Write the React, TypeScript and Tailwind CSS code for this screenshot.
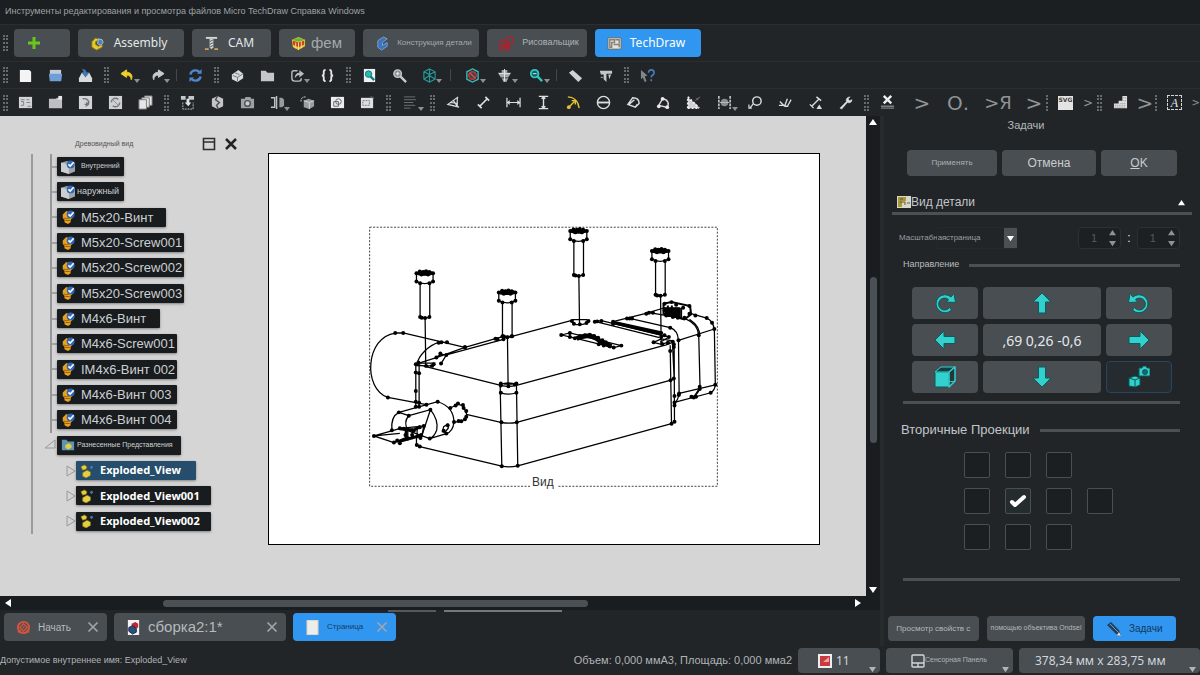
import React, { useState } from 'react';
import clsx from 'clsx';

const NOTO = "font-['Noto_Sans',sans-serif]";

const icons: Record<string, React.ReactNode> = {
    newFile: <path d="M2 2h10l2 2v11H2z" fill="#f4f4f4" />,
    open: (
        <>
            <path d="M2 2h12v10H2z" fill="#c3cdd6" />
            <path d="M1 6h14l-1 8H2z" fill="#6f9fd8" />
        </>
    ),
    save: (
        <>
            <path d="M4 5h8l3 6v4H1v-4z" fill="#d9dcdf" />
            <path d="M4 1c3 0 5 1 5 4h3l-4 5-4-5h2c0-2-1-3-2-4z" fill="#3f77b8" />
        </>
    ),
    undo: <path d="M7 2 1 6l6 4V7.500c3 0 5 2 5 5 2-4 0-8-5-8z" fill="#f0cf2a" stroke="#f0cf2a" />,
    redo: <path d="m9 2 6 4-6 4V7.500c-3 0-5 2-5 5-2-4 0-8 5-8z" fill="#c9cdd0" stroke="#c9cdd0" />,
    refresh: (
        <g fill="none" stroke="#4f86d0" strokeWidth="2.500">
            <path d="M2.500 7c1-5 8-6 10-2M13.500 9c-1 5-8 6-10 2" />
            <path d="M14.500 1v5h-5zM1.500 15v-5h5z" fill="#4f86d0" stroke="none" />
        </g>
    ),
    part: (
        <>
            <path d="M2 7 9 2l5 4v5l-6 4-6-3z" fill="#d9dadb" />
            <path d="m3 8 5 2 6-4M5 5l5 2M8 10v4" stroke="#6d7376" fill="none" />
        </>
    ),
    folder: <path d="M1 3h5l2 2h7v9H1z" fill="#c4c6c8" />,
    share: (
        <>
            <path d="M8 3H4Q2 3 2 5v6q0 3 3 3h5q2 0 2-3" fill="none" stroke="#b9bdc0" strokeWidth="1.500" />
            <path d="M5 11c0-4 2-6 5-6V2l5 4-5 4V7.500c-2 0-3 1-5 3.500z" fill="#b9bdc0" />
        </>
    ),
    braces: (
        <path d="M6 2Q4 2 4 4v2q0 2-2 2 2 0 2 2v2q0 2 2 2M10 2q2 0 2 2v2q0 2 2 2-2 0-2 2v2q0 2-2 2" fill="none" stroke="#e2e4e5" strokeWidth="2" />
    ),
    fitAll: (
        <>
            <path d="M2 1h12v14H2z" fill="#eef2f2" />
            <circle cx="7" cy="6.500" r="3.500" fill="#2fb5b0" stroke="#0e7f7c" />
            <path d="m9 9 4 4" stroke="#0e7f7c" strokeWidth="2.500" />
        </>
    ),
    fitSelection: (
        <>
            <circle cx="6" cy="6" r="4" fill="#8b8f92" stroke="#c8cbcd" strokeWidth="1.500" />
            <path d="m9 9 6 6" stroke="#c8cbcd" strokeWidth="2.500" />
            <path d="m6 4 2 2-2 2-2-2z" fill="#ddd" />
        </>
    ),
    isoCube: (
        <path d="m8 1 6 3v8l-6 3-6-3V4zM2 4l6 3 6-3M8 7v8M8 1v6M2 12l6-4 6 4" fill="none" stroke="#27989a" strokeWidth="1.200" />
    ),
    noClip: (
        <>
            <path d="m8 1 6 3v8l-6 3-6-3V4z" fill="none" stroke="#36b8b6" strokeWidth="1.500" />
            <circle cx="8" cy="8" r="4" fill="#31484c" stroke="#c93636" strokeWidth="1.500" />
            <path d="m5 5 6 6" stroke="#d84a4a" strokeWidth="1.500" />
        </>
    ),
    viewHead: (
        <>
            <path d="M5 2h6v3h4l-3 5H4L1 5h4zM5 11h7l-2 4H7z" fill="#a4a8aa" />
            <path d="M8 1v13M2 6h12" stroke="#e5e5e5" />
        </>
    ),
    zoom: (
        <>
            <circle cx="6" cy="6" r="4" fill="#155f60" stroke="#2fc7c2" strokeWidth="2" />
            <path d="m9 9 5 5" stroke="#2fc7c2" strokeWidth="2.500" />
            <path d="M4 6h4" stroke="#c8f3f1" />
        </>
    ),
    ruler: <path d="m5 2 10 9-4 4L1 5z" fill="#cfd1d2" />,
    caliper: (
        <>
            <path d="M2 3h13v3H9v9L6 12V7H3zM11 7h3l-2 5" fill="#c4c7c9" />
            <path d="M3 10h2" stroke="#c4c7c9" />
        </>
    ),
    whatsThis: (
        <>
            <path d="m1 2 7 6-3 1 2 5-2 1-2-5-2 2z" fill="#80868a" />
            <path d="M9 5c0-4 6-4 6 0 0 3-3 2-3 5M12 12v2" fill="none" stroke="#4a7cc0" strokeWidth="1.700" />
        </>
    ),
    pageDefault: (
        <>
            <path d="M1 2h14v12H1z" fill="#d3d4d5" />
            <path d="M3 5h4M3 7h3v4H3M9 5h3M9 8h4M10 12h4" stroke="#7b8083" fill="none" />
        </>
    ),
    pageTemplate: (
        <>
            <path d="M1 4h7l2-1h5v11H1z" fill="#bdbfc0" />
            <path d="M11 1h4v4h-4z" fill="#e8e8e8" />
        </>
    ),
    pageRedraw: (
        <>
            <path d="M1 1h14v14H1z" fill="#d3d4d5" />
            <path d="M5 4c6-1 8 4 5 6H7" fill="none" stroke="#707477" strokeWidth="1.500" />
            <path d="m9 7 3 3-4 3z" fill="#707477" />
        </>
    ),
    pageRefresh: (
        <>
            <path d="M1 1h14v14H1z" fill="#cfd0d1" />
            <circle cx="8" cy="8" r="4.500" fill="none" stroke="#74787b" strokeWidth="1.500" strokeDasharray="10 4" />
            <path d="m5 5 6 6" stroke="#8b8f91" />
        </>
    ),
    pageCopies: (
        <g fill="#e6e6e6" stroke="#777b7e">
            <path d="M7 1h8v10H7z" />
            <path d="M4 3h8v10H4z" />
            <path d="M1 5h8v10H1z" />
        </g>
    ),
    viewInsert: (
        <>
            <path d="M1 1h5v4H1zM9 1h6v4H9z" fill="#c5c7c9" />
            <path d="M3 8v7h11V8" fill="none" stroke="#c5c7c9" strokeDasharray="2 1" />
            <path d="M7 4h3v4h2l-3 4-4-4h2z" fill="#e1e3e4" />
        </>
    ),
    broken: (
        <>
            <path d="m2 4 6-3 6 3v8l-6 3-6-3z" fill="#c3c5c7" />
            <path d="m8 1-2 4 4 3-3 3 2 4" fill="none" stroke="#494e51" strokeWidth="1.500" />
        </>
    ),
    camera: (
        <>
            <path d="M1 4h4l1-2h5l1 2h3v10H1z" fill="#9ea1a3" />
            <circle cx="8" cy="9" r="3" fill="#caccce" stroke="#4d5154" strokeWidth="1.500" />
        </>
    ),
    section: (
        <>
            <path d="M1 3h4v10H1M7 1v14" fill="none" stroke="#bfc2c4" strokeWidth="1.500" />
            <path d="M10 3h3l2 2v6l-2 2h-3z" fill="#979b9d" />
        </>
    ),
    detail: (
        <>
            <path d="m4 6 5-2 6 2v6l-5 3-6-2z" fill="#9c9fa2" />
            <path d="m4 6 6 2 5-2M10 8v7" stroke="#d4d6d7" fill="none" />
            <path d="M1 7c0-4 2-5 5-5" fill="none" stroke="#d4d6d7" strokeDasharray="2 1" />
        </>
    ),
    draftView: (
        <>
            <path d="M1 2h14v12H1z" fill="#ececec" />
            <circle cx="9" cy="7" r="3" fill="none" stroke="#606568" />
            <path d="M4 7h5v5H4z" fill="none" stroke="#606568" />
        </>
    ),
    clipGroup: (
        <>
            <path d="M1 3h13v11H1z" fill="#dedfe0" />
            <path d="M3 6h7v5H3zM11 2h3v3" fill="none" stroke="#73777a" strokeDasharray="2 1" />
        </>
    ),
    stack: <path d="M1 2h12M1 5h13M1 8h10M1 11h12M1 14h7" stroke="#6d7275" fill="none" />,
    angle: <path d="m13 2-11 8 12 3M12 3v10M8 6l4 6M5 8l7 1" fill="none" stroke="#dcdedf" strokeWidth="1.300" />,
    dimension: <path d="m4 12 8-8M2 10l4 4M10 2l4 4" stroke="#dcdedf" strokeWidth="1.800" />,
    dimH: <path d="M1 3v10M15 3v10M1 8h14M4 6 2 8l2 2M12 6l2 2-2 2" stroke="#dcdedf" strokeWidth="1.300" fill="none" />,
    dimV: <path d="M3 1.500h10M3 14.500h10M8 2v12M6 4l2-2 2 2M6 12l2 2 2-2" stroke="#dcdedf" strokeWidth="1.500" fill="none" />,
    radius: (
        <>
            <path d="M2 2c6 0 11 4 12 12M3 13l6-6M6 6h4v4" fill="none" stroke="#e5c22e" strokeWidth="1.500" />
            <circle cx="3" cy="13" r="2" fill="#e5c22e" />
        </>
    ),
    diameter: (
        <>
            <circle cx="8" cy="8" r="6.500" fill="none" stroke="#dcdedf" strokeWidth="1.500" />
            <path d="M2 8h12" stroke="#dcdedf" strokeWidth="2" />
        </>
    ),
    angle2: <path d="m7 3-5 7 8 3 4-4c0-4-3-6-7-6zM3 10l6-5M10 13l2-3" fill="none" stroke="#dcdedf" strokeWidth="1.500" />,
    angle3: (
        <>
            <path d="m7 4-4 7 8 2c4-3 2-8-4-9z" fill="none" stroke="#dcdedf" strokeWidth="1.500" />
            <g fill="#e9e9e9">
                <circle cx="7" cy="4" r="2" />
                <circle cx="3" cy="12" r="2" />
                <circle cx="12" cy="13" r="2" />
            </g>
        </>
    ),
    areaHatch: (
        <>
            <path d="M2 1c1 5 10 7 12 13H2z" fill="#cfd2d3" />
            <path d="m10 6 5-4M11 3l2 2" stroke="#777c7f" />
            <path d="M2 14V2M2 14h12M2 2l12 12" stroke="#efefef" strokeWidth="2" strokeDasharray="2 2" />
        </>
    ),
    extent: (
        <>
            <circle cx="8" cy="8" r="4" fill="#898d90" />
            <path d="M2 1v14M14 1v14" stroke="#dcdedf" strokeWidth="1.500" strokeDasharray="3 1" />
            <path d="M3 8h10" stroke="#b7babc" />
        </>
    ),
    balloon: (
        <>
            <circle cx="9.500" cy="6.500" r="4.500" fill="none" stroke="#dcdedf" strokeWidth="1.500" />
            <path d="m6 9-4 5M1 10v4h3" stroke="#dcdedf" strokeWidth="1.300" fill="none" />
        </>
    ),
    axo: <path d="m2 7 5 5M7 12l3-8M10 12l4-7M1 11h6M7 12h4" stroke="#dcdedf" strokeWidth="1.400" fill="none" />,
    linkDim: (
        <>
            <path d="m4 12 8-8M2 10l4 4M9 2l5 4" stroke="#dcdedf" strokeWidth="1.500" />
            <path d="m12 10 3 5H9z" fill="#dcdedf" />
        </>
    ),
    repair: <path d="m2 14 7-7c-1-3 1-5 4-5l-2 2 1 2 3-1c0 3-3 4-5 3l-6 7z" fill="#dcdedf" stroke="#dcdedf" strokeWidth=".500" />,
    cleanup: (
        <>
            <path d="m4 1 8 8M12 1 4 9" stroke="#efefef" strokeWidth="2.500" />
            <path d="M1 12h14M1 14h14" stroke="#7b8083" strokeWidth="1.500" />
        </>
    ),
    hatch: (
        <>
            <path d="M10 1h5v13H1V9h5V6h4z" fill="#dedede" />
            <path d="M2 11h12M2 13h12M11 3h3M11 6h3M8 9h6" stroke="#8d9193" strokeDasharray="1 1" />
        </>
    ),
};

interface ToolProps {
    icon: string;
    menu?: boolean;
    wide?: boolean;
}

const Tool: React.FC<ToolProps> = ({ icon, menu, wide }) => (
    <button
        type="button"
        aria-label={icon}
        className={clsx('relative flex h-6 shrink-0 items-center justify-center hover:bg-white/10', wide ? 'w-8' : 'w-[30px]')}
    >
        <svg viewBox="0 0 16 16" className="size-[15px]">
            {icons[icon]}
        </svg>
        {menu && <span className="absolute bottom-1 right-0.5 border-x-3 border-t-4 border-x-transparent border-t-[#8d9194]" />}
    </button>
);

const Grip = ({ first = false }: { first?: boolean }) => (
    <span className={clsx('flex shrink-0 justify-center', first ? 'w-2.5' : 'w-3')}>
        <span className="h-4 w-[5px] border-x-2 border-dotted border-[#666b6e]" />
    </span>
);

const Sep = ({ wide = false }: { wide?: boolean }) => (
    <span className={clsx('flex shrink-0 justify-center', wide ? 'w-3' : 'w-2')}>
        <span className="h-3 w-px bg-[#43484b]" />
    </span>
);

const Tools = ({ names }: { names: string }) => (
    <>
        {names.split(' ').map((name) => (
            <Tool key={name} icon={name} />
        ))}
    </>
);

const workbenches = [
    { label: 'Assembly', width: 'w-[106px]', text: `pr-2 text-[12px] text-gray-200 ${NOTO}` },
    { label: 'CAM', width: 'w-[79px]', text: `pr-2 text-[12px] text-gray-200 ${NOTO}` },
    { label: 'фем', width: 'w-[76px]', text: 'pr-2 text-[15px] text-[#a5a9ac]' },
    { label: 'Конструкция детали', width: 'w-[116px]', text: 'text-[8px] text-[#a5a9ac]' },
    { label: 'Рисовальщик', width: 'w-[100px]', text: 'text-[9px] text-[#b0b4b7]' },
    { label: 'TechDraw', width: 'w-[106px]', text: `pr-2 text-[12px] text-white ${NOTO}` },
];

const workbenchIcons = [
    <>
        <path d="M6 2 2 6v6l5 3 6-3V9l-4 2-3-2V6l4-2z" fill="#e6ca2b" stroke="#8c7a14" />
        <path d="m9 3 4 1 1 3-3 3-3-2z" fill="#4e83bd" stroke="#dbe7f3" strokeWidth=".700" />
    </>,
    <>
        <path d="M2 1h12v2H2z" fill="#d5d8d5" />
        <path d="M6 3h4v9l-2 2-2-2z" fill="#cdd6cf" />
        <path d="m6 6 4-2M6 9l4-2M6 12l4-2" stroke="#506258" />
        <path d="M1 13h4v2H1zM11 13h4v2h-4z" fill="#d8a05a" />
    </>,
    <>
        <path d="m1 4 7-3 7 3v7l-7 4-6-3z" fill="#e7c62c" />
        <path d="m2 5 6 2 6-2v4l-6 3-6-3z" fill="#cf3c2c" />
        <path d="m1 4 7-2 7 2-7 2z" fill="#63b844" />
        <path d="M5 7v6M8 7v8M11 6v7" stroke="#f1e28a" />
    </>,
    <>
        <path d="m3 5 6-4 4 2-5 4v3l5-3v4l-6 4-4-3z" fill="#3c74bd" stroke="#88b1e2" strokeWidth=".800" />
    </>,
    <g fill="none" stroke="#b3202c" strokeWidth="1.500">
        <path d="M1 6h10v9H1zM4 9h5v3H4z" />
        <circle cx="11" cy="5" r="4" />
    </g>,
    <>
        <path d="M1 2h14v12H1z" fill="#e7e3d8" stroke="#6c6a64" />
        <path d="M3 4h5v3H5v5H3zM9 4h4v4M7 9h6v3" fill="none" stroke="#85827b" strokeWidth="1.500" />
    </>,
];

interface TreeItem {
    label: string;
    kind: 'body' | 'screw' | 'group' | 'view';
    width: string;
    text?: string;
    selected?: boolean;
}

const treeItems: TreeItem[] = [
    { label: 'Внутренний', kind: 'body', width: 'w-[67px]', text: 'pl-1 text-[7px]' },
    { label: 'наружный', kind: 'body', width: 'w-[67px]', text: 'text-[9px]' },
    { label: 'M5x20-Винт', kind: 'screw', width: 'w-[109px]' },
    { label: 'M5x20-Screw001', kind: 'screw', width: 'w-[127px]' },
    { label: 'M5x20-Screw002', kind: 'screw', width: 'w-[127px]' },
    { label: 'M5x20-Screw003', kind: 'screw', width: 'w-[127px]' },
    { label: 'M4x6-Винт', kind: 'screw', width: 'w-[103px]' },
    { label: 'M4x6-Screw001', kind: 'screw', width: 'w-[120px]' },
    { label: 'IM4x6-Винт 002', kind: 'screw', width: 'w-[120px]' },
    { label: 'M4x6-Винт 003', kind: 'screw', width: 'w-[120px]' },
    { label: 'M4x6-Винт 004', kind: 'screw', width: 'w-[120px]' },
    { label: 'Разнесенные Представления', kind: 'group', width: 'w-[124px]', text: 'text-[7px]' },
    { label: 'Exploded_View', kind: 'view', width: 'w-[120px]', selected: true },
    { label: 'Exploded_View001', kind: 'view', width: 'w-[135px]' },
    { label: 'Exploded_View002', kind: 'view', width: 'w-[135px]' },
];

const CheckBadge = () => (
    <>
        <circle cx="11" cy="5" r="4.500" fill="#2f67b5" />
        <path d="m8.500 5 2 2 4-4.500" fill="none" stroke="#fff" strokeWidth="1.800" />
    </>
);

const treeIcons: Record<TreeItem['kind'], React.ReactNode> = {
    body: (
        <>
            <path d="m0 3 7-2 9 2v10l-7 3-9-3z" fill="#a1a5aa" />
            <path d="m0 3 9 2v11l-9-3z" fill="#caced2" />
            <CheckBadge />
        </>
    ),
    screw: (
        <>
            <path d="m2 5 4-4 7 3v5l-2 2v3l-3 2-4-2v-3L2 9z" fill="#eda11b" />
            <path d="m3 9 3 1 4-1M5 12h5" stroke="#8f5a07" fill="none" />
            <CheckBadge />
        </>
    ),
    group: (
        <>
            <path d="M1 2h5l2 2h7v10H1z" fill="#5f92b3" />
            <path d="m5 8 4-2 3 2v3l-4 2-3-2z" fill="#e0cd45" />
        </>
    ),
    view: (
        <>
            <path d="m1 3 4-2 3 2-1 3-4 1zM3 10l5-3 4 2v4l-5 3-4-2z" fill="#e3cf3f" stroke="#82751a" strokeWidth=".700" />
            <path d="m11 3 3-1 1 2-2 2z" fill="#4f74b5" />
        </>
    ),
};

const TreeRow: React.FC<{ item: TreeItem }> = ({ item }) => (
    <li className={clsx('flex items-center', item.kind === 'view' ? 'pl-4' : item.kind === 'group' ? 'pl-[11px]' : 'ml-[17px] border-l-2 border-[#959799]')}>
        {item.kind === 'view' && (
            <svg viewBox="0 0 10 12" className="ml-[17px] h-3 w-2.5">
                <path d="m1 1 8 5-8 5z" fill="none" stroke="#999" />
            </svg>
        )}
        {item.kind === 'group' && (
            <svg viewBox="0 0 12 12" className="h-3 w-3">
                <path d="M1 9h10V1z" fill="none" stroke="#999" />
            </svg>
        )}
        {item.kind !== 'view' && item.kind !== 'group' && <span className="h-0.5 w-[5px] bg-[#a3a5a6]" />}
        <button
            type="button"
            className={clsx(
                'flex h-[19px] items-center whitespace-nowrap rounded-[1px] pl-1 text-left text-[#cdd0d2] shadow shadow-black/30',
                item.width,
                item.kind === 'body' || item.kind === 'group' ? 'gap-0.5' : 'gap-1.5',
                item.kind === 'group' && 'ml-px',
                item.selected ? 'bg-[#264d6b]' : 'bg-[#181c1e]',
            )}
        >
            <svg viewBox="0 0 16 16" className="size-[14px] shrink-0">
                {treeIcons[item.kind]}
            </svg>
            <span className={item.text ?? (item.kind === 'view' ? `text-[11px] font-bold text-white ${NOTO}` : 'text-[13px]')}>
                {item.label}
            </span>
        </button>
    </li>
);

const TreePanel = () => (
    <aside className="w-60 shrink-0 pt-5">
        <header className="mb-0.5 flex h-4 items-center pl-[75px] text-[#555]">
            <h2 className="w-[127px] text-[7px]">Древовидный вид</h2>
            <button type="button" aria-label="float" className="flex w-[22px]">
                <svg viewBox="0 0 14 14" className="size-[14px]">
                    <path d="M1.500 1.500h11v11h-11zM1 5h12" fill="none" stroke="#2c2f31" strokeWidth="1.600" />
                </svg>
            </button>
            <button type="button" aria-label="close">
                <svg viewBox="0 0 14 14" className="size-[14px]">
                    <path d="m2 2 10 10M12 2 2 12" stroke="#222527" strokeWidth="2.500" />
                </svg>
            </button>
        </header>
        <ul className="ml-[31px] grid h-[380px] auto-rows-fr border-l-2 border-[#999b9c]">
            {treeItems.map((item) => (
                <TreeRow key={item.label} item={item} />
            ))}
        </ul>
    </aside>
);

const Dots = ({ points }: { points: string }) => (
    <>
        {points.split(' ').map((p, i) => {
            const [x, y] = p.split(',');
            return <circle key={i} cx={x} cy={y} r="6" fill="#000" stroke="none" />;
        })}
    </>
);

// cap screw hanging above its hole, (x, y) is the centre of the head
const Screw = ({ x, y, axis }: { x: number; y: number; axis: number }) => (
    <g transform={`translate(${x} ${y})`}>
        <ellipse cx="0" cy="0" rx="25" ry="6" fill="#000" />
        <path d={`M-25 0V25Q0 37 25 25V0M-14 30V132Q0 138 15 132V30M1 134L3 ${axis}`} />
        <Dots points="-25,0 -15,-5 -5,-4 4,-6 14,-4 25,0 -10,4 10,4 -25,25 25,25 -14,30 14,30 -14,132 -9,134 1,135 14,132" />
    </g>
);

const Drawing = () => (
    <svg viewBox="0 0 552 391" className="block h-auto w-full border border-black bg-white" role="img" aria-label="Вид">
        <path d="M101 73.500H450V333.500H290M262 333.500H101V73.500" fill="none" stroke="#444" strokeDasharray="2 1.500" />
        <text x="264" y="333" fontSize="12" fill="#333" fontFamily="Liberation Sans">
            Вид
        </text>
        <g transform="translate(92 67) scale(.3333)" fill="none" stroke="#000" strokeWidth="3.800">
            <Screw x={193} y={158} axis={279} />
            <Screw x={441} y={216} axis={281} />
            <Screw x={656} y={31} axis={280} />
            <Screw x={902} y={91} axis={280} />

            {/* motor */}
            <path d="M104 338H128L314 381M104 338C15 350 5 505 82 532L198 554" />
            <path d="M260 366H235C205 375 175 405 170 430" />
            <Dots points="104,338 128,338 314,381 82,532 198,554 235,367 243,366 260,366" />

            {/* gearbox body */}
            <path d="M166 432 228 412 314 381 406 355 430 348 456 348 636 300M258 404 430 357M228 412 240 402 258 404 242 430" />
            <path d="M166 432 422 496Q446 502 469 496L920 374 943 365M168 429H222L215 437 166 436" />
            <path d="M166 430V562M176 432V560M168 645V672L178 680 425 739Q448 744 473 738L936 611" />
            <path d="M318 583 422 607Q447 612 470 607L934 480 943 475" />
            <path d="M420 490 425 739M469 490 473 738M420 494Q445 482 469 494M422 518Q446 526 469 518M432 492H458" />
            <path d="M932 375 936 611M939 370 944 475M944 370 945 605 936 611" />
            <Dots points="166,432 174,427 228,412 240,400 258,404 242,430 314,381 406,355 412,357 430,357 430,348 456,348 220,432 215,437 197,437 166,457 176,459 166,513 166,545 176,548 166,560 176,560 169,675 178,680 422,490 469,490 422,496 464,493 445,498 422,518 469,518 424,607 470,607 425,739 473,738 932,392 943,372 943,380 933,480 943,475 936,611 945,605 945,556" />

            {/* output side */}
            <path d="M636 301 642 311Q660 316 680 309L686 302 680 298H640ZM705 303 725 301 928 350 902 366M705 303 900 352M760 304 905 338" />
            <path d="M762 308 905 343M764 305 905 336" strokeWidth="7" />
            <path d="M760 304 862 278 915 262M810 294 932 322Q955 330 957 360L959 520Q955 545 945 547M870 277 980 296Q1015 310 1018 345L1022 505Q1010 530 996 530" />
            <path d="M990 297Q1025 320 1020 350M990 278 1042 293Q1060 300 1065 326L1068 494Q1067 510 1054 518L945 547M957 360 1065 326M959 520 1068 494M1005 528 1020 505" />
            <path d="M882 366 905 372 940 362 905 356Z" />
            <Dots points="636,302 642,310 660,312 680,308 686,302 705,304 712,303 725,302 760,304 760,311 802,294 810,294 817,294 860,280 868,277 880,277 932,322 957,360 905,338 905,350 915,345 928,350 882,366 908,371 925,367 940,364 1042,293 1058,307 1065,326 1068,494 1054,518 1018,345 1021,500 1021,507 996,530 1003,532 1010,530 959,520 958,525 945,528 945,547" />
            <path d="M912 250 936 245 992 257 995 282 975 297 912 280ZM925 255V285M937 255V290M950 262V292M965 262V292" strokeWidth="6" />
            <path d="M915 262H960V288H920Z" fill="#000" />
            <Dots points="915,250 936,245 950,253 990,257 971,262 990,280 1008,285 975,292 915,270 920,285 940,290 955,292" />

            {/* engraved mark on the lid */}
            <path d="M604 344 630 338 785 376 762 382 630 350ZM630 338V350" />
            <path d="M650 355Q690 335 720 362L755 378" strokeWidth="14" />
            <Dots points="604,344 630,338 630,350 785,376 762,382 645,354 660,347 675,345 690,343 703,347 715,352 728,360 738,366 750,378 717,372 732,376" />

            {/* cable gland */}
            <path d="M115 577 232 545Q280 560 281 606Q278 635 258 641L208 656M115 577Q90 590 94 631M145 587 210 569Q235 600 229 630Q222 650 208 656M145 587Q128 605 142 632M115 577 145 587M210 569 185 645M142 632 208 656" />
            <path d="M270 564 293 552 310 558 319 583 315 598 300 605 281 606M246 635 250 620 262 613 264 624 254 637Z" />
            <path d="M40 648 120 625 190 618 185 645 100 668ZM40 648 118 640M100 668 130 655 185 650M142 625V662M155 625V658M170 620V655" />
            <path d="M118 626 160 630 180 620M115 665 185 645M137 630V660" strokeWidth="9" />
            <Dots points="115,577 232,545 281,606 258,641 208,656 145,587 210,569 94,631 270,564 286,556 293,550 308,555 310,564 318,573 318,590 314,598 303,604 295,603 262,616 250,632 40,648 100,668 118,625 130,626 160,632 190,618 178,622 118,670 110,662 142,655 155,645 182,645 180,654 135,645" />
        </g>
    </svg>
);

const Triangle = ({ dir, className }: { dir: 'up' | 'down' | 'left' | 'right'; className?: string }) => {
    const shape = { up: 'm0 7 4-6 4 6z', down: 'm0 1 4 6 4-6z', left: 'm7 0-6 4 6 4z', right: 'm1 0 6 4-6 4z' };
    return (
        <svg viewBox="0 0 8 8" className={clsx('shrink-0 fill-current', className ?? 'size-2')}>
            <path d={shape[dir]} />
        </svg>
    );
};

const Canvas = () => (
    <div className="flex">
        <div className="min-w-0 flex-1">
            <div className="flex h-[480px] bg-[#d5d5d5]">
                <TreePanel />
                <div className="min-w-0 flex-1 pl-7 pr-[46px] pt-[37px]">
                    <Drawing />
                </div>
            </div>
            <div className="flex h-3.5 items-center bg-[#191d1f] px-1 text-white">
                <Triangle dir="left" />
                <div className="flex flex-1 justify-center pr-[116px]">
                    <div className="h-[7px] w-[425px] rounded-full bg-[#4a5054]" />
                </div>
                <Triangle dir="right" />
            </div>
        </div>
        <div className="flex w-3.5 flex-col items-center bg-[#191d1f] py-0.5 pb-4 text-white">
            <Triangle dir="up" />
            <div className="flex flex-1 items-center pt-2">
                <div className="h-[166px] w-[7px] rounded-full bg-[#4a5054]" />
            </div>
            <Triangle dir="down" />
        </div>
    </div>
);

const docIcons = [
    <>
        <circle cx="8" cy="8" r="6" fill="none" stroke="#d5533f" strokeWidth="2" />
        <path d="m8 4 4 4-4 4-4-4z" fill="none" stroke="#d5533f" strokeWidth="1.500" />
        <path d="M8 7v2M2 13l3-2M14 13l-3-2" stroke="#d5533f" strokeWidth="2" />
    </>,
    <>
        <path d="M2 0h12v16H2z" fill="#f3f3f3" />
        <path d="m6 4 4-2 3 2v4l-4 2-3-2z" fill="#c32732" />
        <path d="m3 8 4-2 4 3v4l-4 2-4-3z" fill="#2c4f80" stroke="#152a48" />
    </>,
    <path d="M2 0h12v16H2z" fill="#ededeb" stroke="#c5c3b8" />,
];

const documents = [
    { label: 'Начать', width: 'w-[103px]', text: 'text-[10px] text-[#b7babc]' },
    { label: 'сборка2:1*', width: 'w-[172px]', text: 'text-[15px] text-[#b7babc]' },
    { label: 'Страница', width: 'w-[103px]', text: 'text-[8px] text-[#173e68]' },
];

const DocumentTabs = () => {
    const [active, setActive] = useState('Страница');
    return (
        <div>
            <div className="flex h-[3px] gap-2 pl-[388px]">
                <span className="h-0.5 w-12 bg-[#55595c]" />
                <span className="h-0.5 w-[118px] bg-[#74787a]" />
            </div>
            <div className="flex gap-[7px] pl-1">
                {documents.map((doc, i) => (
                    <div
                        key={doc.label}
                        className={clsx('flex h-7 items-center rounded pl-3 pr-2', doc.width, active === doc.label ? 'bg-[#3096ef]' : 'bg-[#484e52]')}
                    >
                        <button type="button" className="flex flex-1 items-center gap-[7px] whitespace-nowrap" onClick={() => setActive(doc.label)}>
                            <svg viewBox="0 0 16 16" className="size-[15px] shrink-0">
                                {docIcons[i]}
                            </svg>
                            <span className={doc.text}>{doc.label}</span>
                        </button>
                        <button type="button" aria-label={`Close ${doc.label}`}>
                            <svg viewBox="0 0 12 12" className="size-3">
                                <path d="m1.500 1.500 9 9M10.500 1.500l-9 9" stroke="#9ea6ac" strokeWidth="1.700" />
                            </svg>
                        </button>
                    </div>
                ))}
            </div>
        </div>
    );
};

const Rule = ({ className }: { className?: string }) => <div className={clsx('h-[3px] bg-[#4b5053]', className)} />;

const Teal: React.FC<{ children: React.ReactNode }> = ({ children }) => (
    <svg viewBox="0 0 22 22" className="size-[22px]" fill="#33d1cd" stroke="#0b5a5c" strokeLinejoin="round">
        {children}
    </svg>
);

const arrow = 'M11 1 20 10H14.500V21H7.500V10H2z';

// open ring with an arrow head at the upper right
const turn = 'M17 5A9 9 0 1 0 17.500 18L15.500 15.500A6 6 0 1 1 14.500 7.500L12.500 10 21.500 10.500 20 1.500z';

const directionButtons = [
    { label: 'Rotate clockwise', icon: <path d={turn} /> },
    { label: 'Up', icon: <path d={arrow} /> },
    { label: 'Rotate counterclockwise', icon: <path d={turn} transform="matrix(-1 0 0 1 22 0)" /> },
    { label: 'Left', icon: <path d={arrow} transform="rotate(-90 11 11)" /> },
    { label: 'Direction', icon: null },
    { label: 'Right', icon: <path d={arrow} transform="rotate(90 11 11)" /> },
    {
        label: 'Front view',
        icon: (
            <>
                <path d="M1 6h14v15H1z" />
                <path d="m1 6 6-5h14l-6 5z" fill="#123f43" stroke="#33d1cd" />
                <path d="m15 6 6-5v14l-6 6z" fill="#22383b" stroke="#33d1cd" strokeWidth="1.500" />
                <path d="m15 16 6-1" stroke="#33d1cd" />
            </>
        ),
    },
    { label: 'Down', icon: <path d={arrow} transform="rotate(180 11 11)" /> },
    {
        label: 'Camera view',
        icon: (
            <>
                <path d="m1 12 6-2 5 2v7l-5 2-6-1z" />
                <path d="m1 12 6 2 5-2M7 14v7" fill="none" />
                <path d="M11 2h3l1-2h3l1 2h3v8H11z" />
                <circle cx="17" cy="6" r="2.500" fill="#17686b" />
            </>
        ),
    },
];

const Spin = ({ label }: { label: string }) => (
    <div className="flex h-[22px] flex-1 items-center rounded-sm border border-[#2b3033] bg-[#1c2022] pr-1">
        <input aria-label={label} defaultValue="1" className="w-full min-w-0 bg-transparent text-center text-[11px] text-[#555a5d]" />
        <span className="flex flex-col gap-1 text-[#8e9295]">
            <Triangle dir="up" className="size-[7px]" />
            <Triangle dir="down" className="size-[7px]" />
        </span>
    </div>
);

const projections = [
    [true, true, true, false],
    [true, true, true, true],
    [true, true, true, false],
];

const TaskPanel = () => (
    <aside className="flex w-80 shrink-0 flex-col border-l-4 border-[#262b2e] bg-[#212528]">
        <h2 className="h-[34px] pr-8 pt-px text-center text-[11px] leading-4 text-[#b5b8ba]">Задачи</h2>
        <div className="mx-[23px] flex gap-[5px] text-[#c9ccce]">
            <button type="button" className="h-[26px] flex-[90] rounded-sm bg-[#484e52] text-[8px] text-[#abb0b3]">
                Применять
            </button>
            <button type="button" className="h-[26px] flex-[94] rounded-sm bg-[#484e52] text-[12px]">
                Отмена
            </button>
            <button type="button" className="h-[26px] flex-[76] rounded-sm bg-[#484e52] text-[12px]">
                <u>O</u>K
            </button>
        </div>
        <div className="mx-2 mt-4 flex h-5 items-center pl-[5px] text-[#c3c6c8]">
            <svg viewBox="0 0 14 12" className="h-3 w-3.5">
                <path d="M0 0h14v12H0z" fill="#dad8c8" />
                <path d="M1 1h8v4H5v6H1z" fill="#a5993a" />
                <path d="M3 3h3M3 6h5v3M10 7h3" stroke="#5d5a3c" fill="none" />
            </svg>
            <h3 className="flex-1 text-[12px]">Вид детали</h3>
            <button type="button" aria-label="Collapse" className="mr-[7px] text-white">
                <Triangle dir="up" className="size-[7px]" />
            </button>
        </div>
        <Rule className="mx-2" />
        <div className="mx-[15px] mr-5 mt-3 flex items-center">
            <label htmlFor="scale" className="w-[38px] whitespace-nowrap text-[8px] text-[#9a9ea1]">
                Масштабная
            </label>
            <span className="flex h-[22px] w-20 items-center border border-r-0 border-[#25292c]">
                <select id="scale" className="min-w-0 flex-1 appearance-none pl-2 text-[8px] text-[#9a9ea1]">
                    <option>страница</option>
                </select>
                <span className="flex h-full w-[13px] items-center justify-center bg-[#4a5054] text-white">
                    <Triangle dir="down" className="size-[7px]" />
                </span>
            </span>
            <div className="ml-[61px] flex flex-1 items-center gap-1.5 text-[12px] text-gray-200">
                <Spin label="Scale numerator" />
                <span>:</span>
                <Spin label="Scale denominator" />
            </div>
        </div>
        <div className="ml-[19px] mr-5 mt-2 flex h-4 items-center gap-2.5 text-[9px] text-[#b9bcbe]">
            <h4>Направление</h4>
            <Rule className="flex-1" />
        </div>
        <div className="mx-7 mt-3.5 grid grid-cols-[66fr_118fr_66fr] gap-[5px]">
            {directionButtons.map((b) =>
                b.icon ? (
                    <button
                        key={b.label}
                        type="button"
                        aria-label={b.label}
                        className={clsx(
                            'flex h-8 items-center justify-center rounded-sm',
                            b.label === 'Camera view' ? 'border border-[#27455f] bg-[#262b2f]' : 'bg-[#484e52]',
                        )}
                    >
                        <Teal>{b.icon}</Teal>
                    </button>
                ) : (
                    <input
                        key={b.label}
                        aria-label={b.label}
                        defaultValue=",69 0,26 -0,6"
                        className={`h-8 w-full min-w-0 rounded-sm bg-[#484e52] text-center text-[14px] text-gray-200 ${NOTO}`}
                    />
                ),
            )}
        </div>
        <Rule className="ml-[19px] mr-5 mt-2" />
        <div className="ml-[17px] mr-5 mt-4 flex h-5 items-center gap-2.5 text-[13px] text-[#c3c6c8]">
            <h4 className="whitespace-nowrap">Вторичные Проекции</h4>
            <Rule className="flex-1" />
        </div>
        <div className="ml-20 mt-3 grid w-fit grid-cols-4 gap-x-[15px] gap-y-2.5">
            {projections.map((row, r) =>
                row.map((shown, c) =>
                    shown ? (
                        <label key={`${r}-${c}`} className="grid size-[26px]">
                            <input
                                type="checkbox"
                                aria-label={`Projection ${r + 1}-${c + 1}`}
                                defaultChecked={r === 1 && c === 1}
                                className="peer col-start-1 row-start-1 size-[26px] appearance-none rounded-xs border border-[#4a4f52] bg-[#1b1f21] checked:bg-[#252c30]"
                            />
                            <svg viewBox="0 0 26 26" className="pointer-events-none invisible col-start-1 row-start-1 peer-checked:visible">
                                <path d="m7 14 3 3 9-8" fill="none" stroke="#fff" strokeWidth="4" strokeLinecap="round" strokeLinejoin="round" />
                            </svg>
                        </label>
                    ) : (
                        <span key={`${r}-${c}`} />
                    ),
                ),
            )}
        </div>
        <Rule className="ml-[19px] mr-5 mt-7" />
        <div className="mb-[5px] ml-1 mr-6 mt-auto flex gap-2 text-[#b4b8ba]">
            <button type="button" className="h-[25px] min-w-0 flex-[90] whitespace-nowrap rounded bg-[#484e52] text-[8px]">
                Просмотр свойств с
            </button>
            <button type="button" className="h-[25px] min-w-0 flex-[98] whitespace-nowrap rounded bg-[#484e52] text-[7px]">
                помощью объектива Ondsel
            </button>
            <button type="button" className="flex h-[25px] min-w-0 flex-[82] items-center justify-center gap-2 rounded bg-[#3096ef] text-[10px] text-[#14385c]">
                <svg viewBox="0 0 14 14" className="size-3.5">
                    <path d="M0 3 4 0l8 8 2 6-5-2z" fill="#23415f" />
                    <path d="m3 2 8 8" stroke="#7d97b0" />
                    <path d="m12 10 2 4-4-1z" fill="#e8dfd0" />
                </svg>
                Задачи
            </button>
        </div>
    </aside>
);

const StatusBar = () => (
    <footer className="flex h-[29px] items-center gap-1.5 bg-[#212528] text-[#b0b4b6]">
        <p className="flex-1 text-[9px]">Допустимое внутреннее имя: Exploded_View</p>
        <p className="text-[11px]">Объем: 0,000 ммА3, Площадь: 0,000 мма2</p>
        <button type="button" className="flex h-[25px] w-[82px] items-center rounded-sm bg-[#484e52] pl-5 pr-1">
            <svg viewBox="0 0 14 14" className="size-3.5">
                <path d="M0 0h14v14H0z" fill="#eee" />
                <path d="M2 2h10v10H2z" fill="#c93a3f" />
                <path d="M5 8 11 3v5z" fill="#e9a6a0" />
            </svg>
            <span className={`flex-1 pl-1 text-left text-[12px] text-gray-300 ${NOTO}`}>11</span>
            <Triangle dir="down" className="size-[7px] self-end" />
        </button>
        <button type="button" className="flex h-[25px] w-[127px] items-center rounded-sm bg-[#484e52] pl-[25px] pr-1">
            <svg viewBox="0 0 14 14" className="size-3.5 shrink-0">
                <path d="M1 2Q1 1 2 1h10q1 0 1 1v10q0 1-1 1H2q-1 0-1-1zM1 9h12M7 9v4" fill="none" stroke="#d2d5d6" strokeWidth="1.400" />
            </svg>
            <span className="flex-1 whitespace-nowrap text-left text-[7px]">Сенсорная Панель</span>
            <Triangle dir="down" className="size-[7px] self-end" />
        </button>
        <button type="button" className="flex h-[25px] w-[181px] items-center rounded-sm bg-[#484e52] pl-4 pr-1">
            <span className={`flex-1 text-left text-[12px] text-gray-300 ${NOTO}`}>378,34 мм x 283,75 мм</span>
            <Triangle dir="down" className="size-[7px] self-end" />
        </button>
    </footer>
);

const Toolbars = () => (
    <header>
        <nav className="flex h-6 items-center bg-[#1b1f21] px-[5px] text-[9px] text-[#9da1a4]">
            Инструменты редактирования и просмотра файлов Micro TechDraw Справка Windows
        </nav>
        <div className="flex h-[37px] items-center border-t border-[#2a2e31]">
            <Grip first />
            <button type="button" aria-label="Add" className="ml-1 flex h-7 w-14 items-center rounded bg-[#484e52] pl-3">
                <svg viewBox="0 0 16 16" className="size-4">
                    <path d="M6.500 2h3v4.500H14v3H9.500V14h-3V9.500H2v-3h4.500z" fill="#6cc51f" />
                </svg>
            </button>
            <div className="ml-2 flex gap-2">
                {workbenches.map((wb, i) => (
                    <button
                        key={wb.label}
                        type="button"
                        className={clsx('flex h-7 items-center rounded pl-3', wb.width, wb.label === 'TechDraw' ? 'bg-[#3096ef]' : 'bg-[#484e52]')}
                    >
                        <svg viewBox="0 0 16 16" className="size-[15px] shrink-0">
                            {workbenchIcons[i]}
                        </svg>
                        <span className={clsx('flex-1 whitespace-nowrap text-center', wb.text)}>{wb.label}</span>
                    </button>
                ))}
            </div>
        </div>
        <div className="flex h-[27px] items-center border-t border-[#2a2e31]">
            <Grip first />
            <Tools names="newFile open save" />
            <Grip />
            <Tool icon="undo" menu />
            <Tool icon="redo" menu />
            <Sep />
            <Tool icon="refresh" />
            <Grip />
            <Tools names="part folder" />
            <Tool icon="share" menu />
            <Tool icon="braces" />
            <Grip />
            <Tools names="fitAll fitSelection" />
            <Tool icon="isoCube" menu />
            <Sep wide />
            <Tool icon="noClip" menu wide />
            <Tool icon="viewHead" menu wide />
            <Tool icon="zoom" menu wide />
            <Sep />
            <Tools names="ruler caliper" />
            <Grip />
            <Tool icon="whatsThis" />
        </div>
        <div className="flex h-7 items-center overflow-hidden border-t border-[#2a2e31] font-['DejaVu_Sans',sans-serif] text-[#8f9396]">
            <Grip first />
            <Tools names="pageDefault pageTemplate pageRedraw pageRefresh pageCopies" />
            <Grip />
            <Tools names="viewInsert broken camera" />
            <Tool icon="section" menu />
            <Tools names="detail draftView clipGroup" />
            <Grip />
            <Tool icon="stack" menu wide />
            <Grip />
            <Tools names="angle dimension dimH dimV radius diameter angle2 angle3 areaHatch" />
            <Tool icon="extent" menu wide />
            <Tools names="balloon axo linkDim repair" />
            <Grip />
            <Tool icon="cleanup" />
            <span className="w-10 shrink-0 text-center text-[20px]">&gt;</span>
            <span className="w-8 shrink-0 text-center text-[20px]">О.</span>
            <span className="w-12 shrink-0 text-center text-[18px]">&gt;Я</span>
            <span className="w-6 shrink-0 text-center text-[20px]">&gt;</span>
            <span className="h-4 shrink-0 border-l-2 border-dotted border-[#666b6e]" />
            <button type="button" className="ml-2.5 flex h-3.5 w-[15px] shrink-0 justify-center bg-[#e3e3e3] text-[6px] font-bold leading-2 text-[#444]">
                SVG
            </button>
            <span className="ml-2.5 w-2.5 shrink-0 text-center text-[12px]">&gt;</span>
            <Grip />
            <Tool icon="hatch" />
            <span className="w-5 shrink-0 text-center text-[20px]">&gt;</span>
            <span className="h-4 shrink-0 border-l-2 border-dotted border-[#666b6e]" />
            <button
                type="button"
                className="ml-2.5 flex size-[15px] shrink-0 items-center justify-center border border-dashed border-gray-300 font-['Liberation_Serif',serif] text-[12px] italic text-gray-200"
            >
                A
            </button>
            <span className="ml-auto shrink-0 text-[10px]">&gt;</span>
        </div>
    </header>
);

export default function App() {
    return (
        <div className="flex min-h-screen flex-col bg-[#212528] font-['Liberation_Sans',sans-serif]">
            <Toolbars />
            <main className="flex flex-1">
                <div className="min-w-0 flex-1">
                    <Canvas />
                    <DocumentTabs />
                </div>
                <TaskPanel />
            </main>
            <StatusBar />
        </div>
    );
}
